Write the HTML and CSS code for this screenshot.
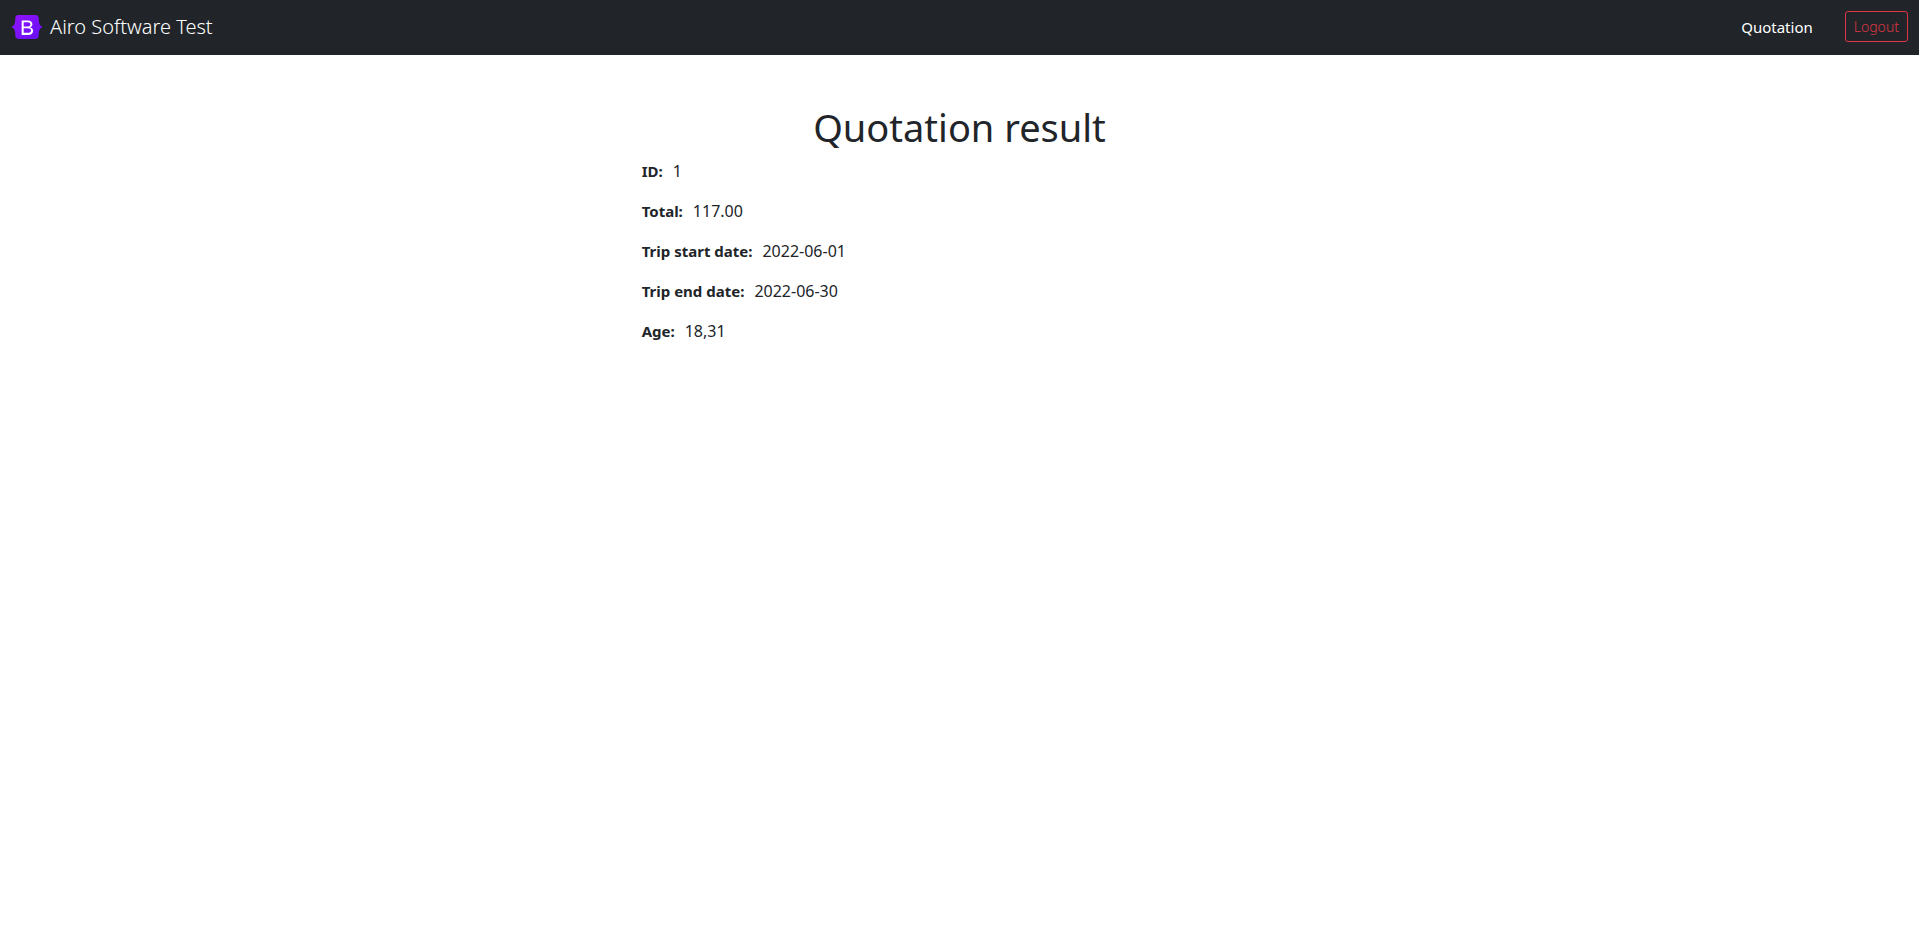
FILE: index.html
```html
<!DOCTYPE html>
<html lang="en">
<head>
<meta charset="utf-8">
<meta name="viewport" content="width=device-width, initial-scale=1">
<title>Airo Software Test</title>
<link rel="stylesheet" href="styles.css">
</head>
<body>
<header class="navbar">
  <a class="brand" href="#">
    <svg class="brand-logo" viewBox="0 0 118 94" aria-hidden="true">
      <defs>
        <linearGradient id="logo-fill" x1="0" y1="0" x2="1" y2="1">
          <stop offset="0" stop-color="#9013fe"/>
          <stop offset="1" stop-color="#6610f2"/>
        </linearGradient>
      </defs>
      <path fill="url(#logo-fill)" d="M24.5 0C17.7 0 12.700 5.900 12.900 12.300c.2 6.200-.1 14.100-2.100 20.600C8.800 39.400 5.500 43.500 0 44v6c5.500.5 8.800 4.600 10.800 11.100 2 6.500 2.300 14.400 2.100 20.600C12.700 88.100 17.700 94 24.500 94h69.100c6.800 0 11.800-5.900 11.600-12.300-.2-6.200.1-14.100 2.100-20.600 2-6.500 5.200-10.600 10.700-11.100v-6c-5.500-.5-8.700-4.600-10.700-11.100-2-6.500-2.300-14.400-2.100-20.600C105.400 5.900 100.400 0 93.600 0z"/>
      <path fill="#fff" fill-rule="evenodd" d="M38 21.500h24.500c11 0 17.800 5.700 17.800 14.300 0 6-4.500 11.100-10.400 12v.3c7.900.9 13.200 6.500 13.200 14 0 10.500-7.800 16.700-20.700 16.700H38zM46 28.500v16.700h13.500c8.400 0 12.700-2.900 12.700-8.300 0-5.300-3.900-8.400-10.700-8.400zM46 51.700v18.100h15.500c9 0 13.300-3.100 13.300-9 0-6-4.600-9.100-13.600-9.100z"/>
    </svg>
    <span>Airo Software Test</span>
  </a>
  <nav class="nav-links">
    <a class="nav-link" href="#">Quotation</a>
    <button class="logout" type="button">Logout</button>
  </nav>
</header>
<main class="result">
  <h1 class="title">Quotation result</h1>
  <dl class="details">
    <div class="row"><dt>ID:</dt><dd>1</dd></div>
    <div class="row"><dt>Total:</dt><dd>117.00</dd></div>
    <div class="row"><dt>Trip start date:</dt><dd>2022-06-01</dd></div>
    <div class="row"><dt>Trip end date:</dt><dd>2022-06-30</dd></div>
    <div class="row"><dt>Age:</dt><dd>18,31</dd></div>
  </dl>
</main>
</body>
</html>
```
FILE: styles.css
```css
* { box-sizing: border-box; }
body {
  margin: 0;
  background: #fff;
  color: #212529;
  font: 400 16px/24px "Noto Sans", sans-serif;
}
.navbar {
  display: flex;
  align-items: flex-start;
  justify-content: space-between;
  padding: 8px 11px 8px 12px;
  background: #212529;
}
.brand {
  display: flex;
  align-items: center;
  gap: 8px;
  color: #fff;
  font-size: 20px;
  font-weight: 300;
  line-height: 38px;
  text-decoration: none;
}
.brand-logo { width: 30px; height: 24px; }
.nav-links {
  display: flex;
  align-items: center;
  gap: 32px;
}
.nav-link {
  padding: 7px 0 8px;
  color: #fff;
  font-size: 15px;
  text-decoration: none;
}
.logout {
  height: 31px;
  margin-bottom: 2px;
  padding: 4px 8px;
  border: 1px solid #dc3545;
  border-radius: 3px;
  background: transparent;
  color: #dc3545;
  font: 300 14px/21px "Noto Sans", sans-serif;
}
.result {
  width: 33.333%;
  margin: 48px auto 0;
}
.title {
  margin: 0 0 8px;
  font-size: 38px;
  font-weight: 400;
  line-height: 48px;
  text-align: center;
}
.details { margin: 0; }
.row {
  display: flex;
  gap: 10px;
  margin-bottom: 16px;
  padding-left: 2px;
}
.row dt {
  font-size: 15px;
  font-weight: 700;
}
.row dd { margin: 0; }
```
